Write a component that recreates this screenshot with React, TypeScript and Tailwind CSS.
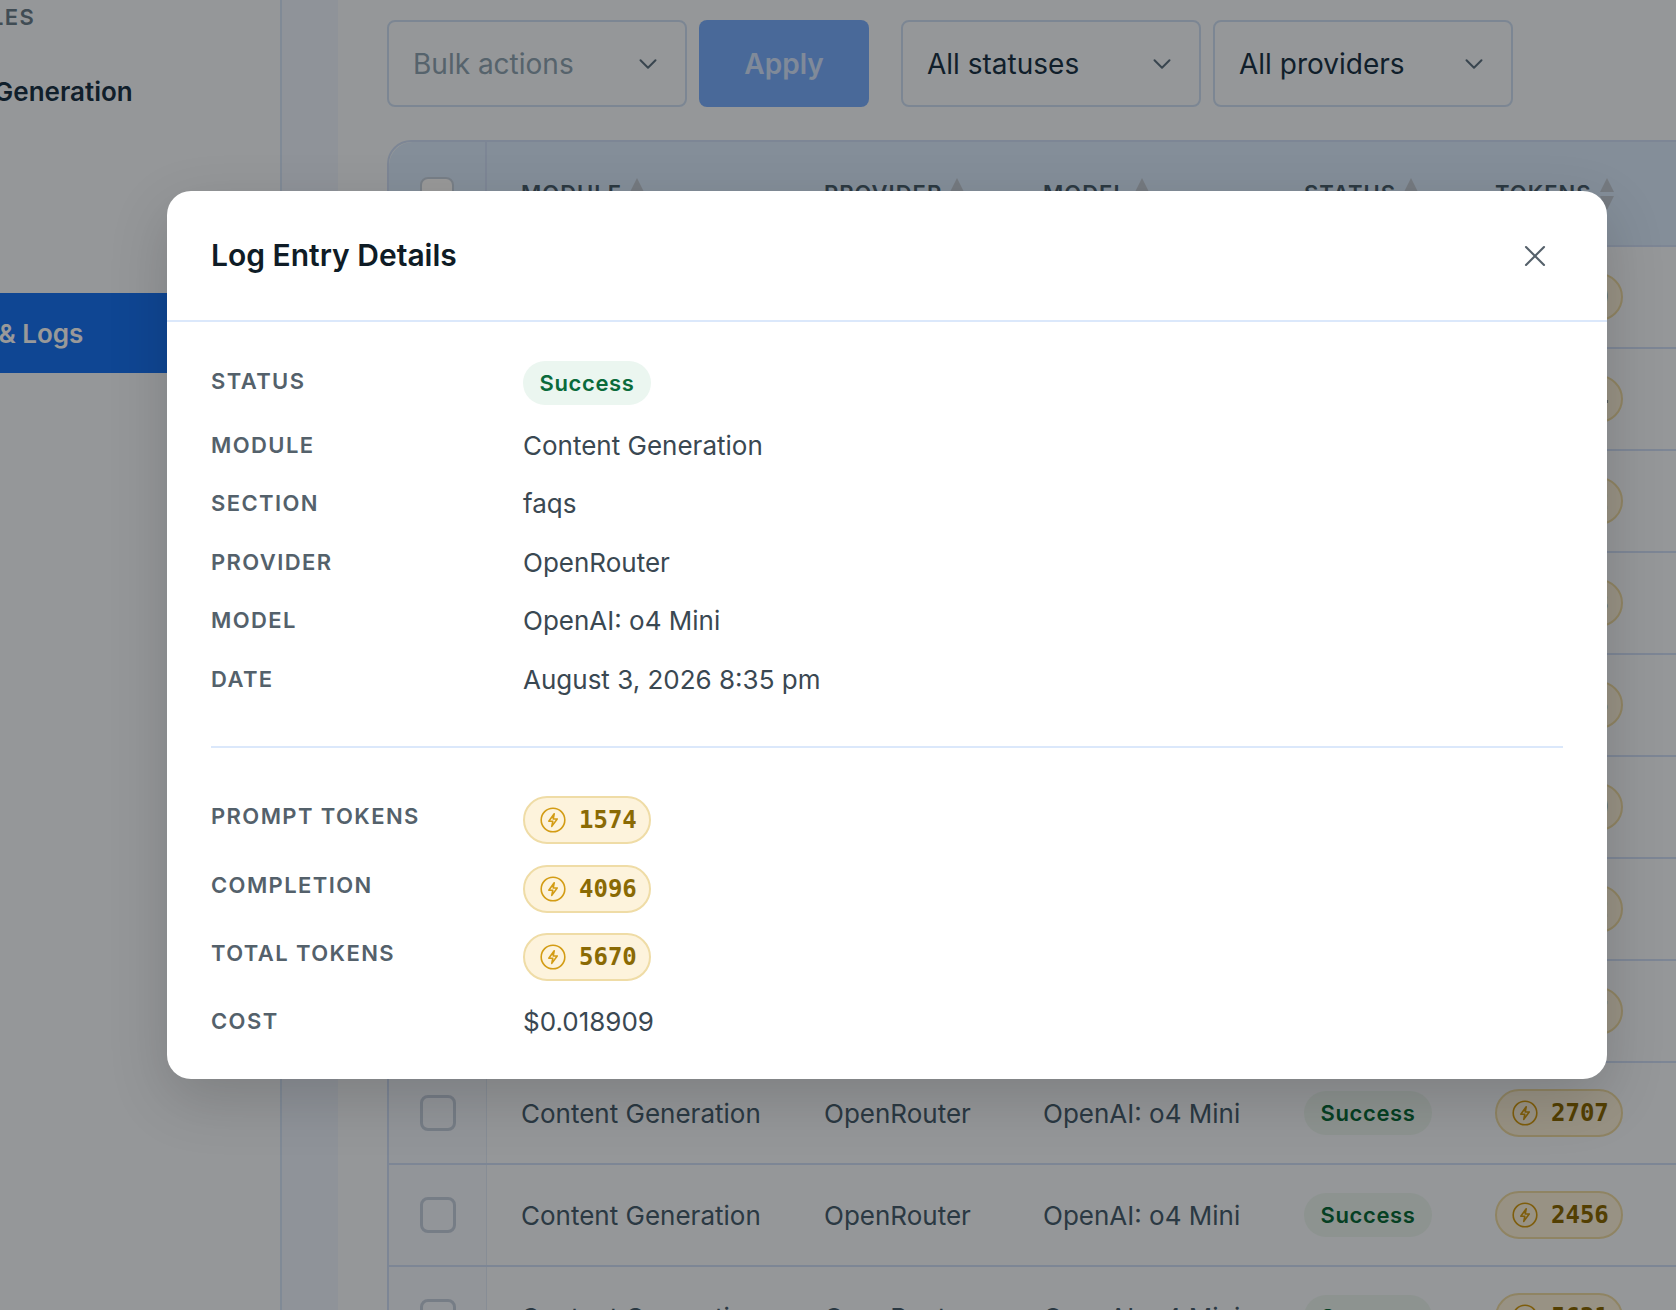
import { ChevronDown, X } from "lucide-react";

const rows = ["3120", "2874", "5012", "1988", "3345", "2690", "4122", "3907", "2707", "2456", "5621"];

function TokenBadge({ value }: { value: string }) {
  return (
    <span className="inline-flex h-[48px] w-[128px] items-center gap-[13px] rounded-full border-2 border-[#efdca6] bg-[#fdf3dc] pl-[15px] text-[#8a6a04]">
      <svg width="26" height="26" viewBox="0 0 26 26" fill="none" stroke="#d39c14" strokeWidth="1.6" strokeLinejoin="round" className="shrink-0">
        <circle cx="13" cy="13" r="11.8" />
        <path d="M14.2 6.8 8.8 14.2h4l-1 5.2 5.4-7.4h-4z" />
      </svg>
      <span className="font-['DejaVu_Sans_Mono',monospace] text-[24px] leading-none font-bold">{value}</span>
    </span>
  );
}

function SuccessBadge() {
  return (
    <span className="inline-flex h-[44px] w-[128px] items-center justify-center rounded-full bg-[#ebf6f0] text-[22px] font-semibold tracking-[0.6px] text-[#0a6b3b]">
      Success
    </span>
  );
}

function Select({ label, muted }: { label: string; muted?: boolean }) {
  return (
    <div className={`flex h-[87px] w-[300px] items-center justify-between rounded-lg border-2 border-[#cfe0f6] pr-[22px] pl-[24px] text-[28px] ${muted ? "text-[#8fa5b4]" : "text-[#1c3548]"}`}>
      {label}
      <ChevronDown size={30} strokeWidth={1.6} className="text-[#5f7484]" />
    </div>
  );
}

function HeaderCell({ label, both }: { label: string; both?: boolean }) {
  return (
    <div className="flex items-center gap-[8px] text-[22px] font-semibold tracking-[1px] text-[#4a5f6f]">
      {label}
      <span className="flex flex-col gap-[4px]">
        <span className="h-0 w-0 border-x-[7px] border-b-[14px] border-x-transparent border-b-[#c3ccd6]" />
        <span className={`h-0 w-0 border-x-[7px] border-t-[14px] border-x-transparent ${both ? "border-t-[#c3ccd6]" : "border-t-[#c3ccd6]"}`} />
      </span>
    </div>
  );
}

function Field({ label, value, className }: { label: string; value: string; className?: string }) {
  return (
    <div className={`flex h-[42px] items-center ${className ?? ""}`}>
      <div className="w-[312px] text-[22px] font-semibold tracking-[1.4px] text-[#54616b]">{label}</div>
      <div className="text-[26px] text-[#3a4852]">{value}</div>
    </div>
  );
}

function TokenField({ label, value }: { label: string; value: string }) {
  return (
    <div className="flex h-[48px] items-start">
      <div className="w-[312px] text-[22px] leading-[40px] font-semibold tracking-[1.4px] text-[#54616b]">{label}</div>
      <TokenBadge value={value} />
    </div>
  );
}

export default function App() {
  return (
    <div className="relative flex h-[1310px] w-[1676px] overflow-hidden bg-[#f8fcff] font-['Inter',sans-serif]">
      <aside className="w-[282px] shrink-0 overflow-hidden border-r-2 border-[#d6e6fa]">
        <div className="-ml-[84px] pt-[3px] text-[22px] leading-[28px] font-semibold tracking-[1.4px] whitespace-nowrap text-[#6b7f8d]">MODULES</div>
        <div className="mt-[43px] -ml-[113px] text-[26px] leading-[36px] font-semibold whitespace-nowrap text-[#1c3548]">Content Generation</div>
        <div className="mt-[183px] flex h-[80px] items-center bg-[#1975f5]">
          <span className="-ml-[88px] text-[26px] font-semibold whitespace-nowrap text-white">Usage &amp; Logs</span>
        </div>
      </aside>
      <div className="w-[56px] shrink-0 bg-[#eef5ff]" />
      <main className="min-w-0 flex-1 pt-[20px] pl-[49px]">
        <div className="flex">
          <Select label="Bulk actions" muted />
          <div className="ml-[12px] flex h-[87px] w-[170px] items-center justify-center rounded-lg bg-[#7bb0ff] text-[28px] font-semibold text-[#ffffff]/70">Apply</div>
          <div className="ml-[32px] flex gap-[12px]">
            <Select label="All statuses" />
            <Select label="All providers" />
          </div>
        </div>

        <div className="mt-[33px] w-[1500px] rounded-tl-3xl border-t-2 border-l-2 border-[#d0e0f8]">
          <div className="grid h-[105px] grid-cols-[98px_337px_219px_261px_191px_1fr] items-center rounded-tl-3xl border-b-2 border-[#d0e0f8] bg-[#dcedff]">
            <div className="flex h-full items-center justify-center border-r-2 border-[#d0e0f8]">
              <span className="h-[34px] w-[34px] rounded-lg border-2 border-[#c8d4e2] bg-white" />
            </div>
            <div className="pl-[34px]"><HeaderCell label="MODULE" /></div>
            <HeaderCell label="PROVIDER" />
            <HeaderCell label="MODEL" />
            <HeaderCell label="STATUS" />
            <HeaderCell label="TOKENS" both />
          </div>
          {rows.map((tokens) => (
            <div key={tokens} className="grid h-[102px] grid-cols-[98px_337px_219px_261px_191px_1fr] items-center border-b-2 border-[#d0e0f8] text-[26px] text-[#486070]">
              <div className="flex h-full items-center justify-center border-r border-[#e2ecf8] bg-[#f3f8ff]">
                <span className="h-[36px] w-[36px] rounded-lg border-[3px] border-[#c5d0e0]" />
              </div>
              <div className="pl-[34px]">Content Generation</div>
              <div>OpenRouter</div>
              <div>OpenAI: o4 Mini</div>
              <div><SuccessBadge /></div>
              <div className="flex"><TokenBadge value={tokens} /></div>
            </div>
          ))}
        </div>
      </main>

      <div className="absolute inset-0 bg-black/40" />

      <div className="absolute top-[191px] left-[167px] h-[888px] w-[1440px] rounded-3xl bg-white shadow-[0_20px_60px_rgba(0,0,0,0.16)]">
        <div className="flex h-[131px] items-center justify-between border-b-2 border-[#dbe8fb] pr-[54px] pl-[44px]">
          <h2 className="text-[30px] font-semibold text-[#0f1c26]">Log Entry Details</h2>
          <X size={36} strokeWidth={1.4} className="text-[#55606a]" />
        </div>
        <div className="px-[44px] pt-[39px]">
          <div className="flex h-[44px] items-start">
            <div className="w-[312px] text-[22px] leading-[40px] font-semibold tracking-[1.4px] text-[#54616b]">STATUS</div>
            <SuccessBadge />
          </div>
          <div className="mt-[19px] flex flex-col gap-[16.6px]">
            <Field label="MODULE" value="Content Generation" />
            <Field label="SECTION" value="faqs" />
            <Field label="PROVIDER" value="OpenRouter" />
            <Field label="MODEL" value="OpenAI: o4 Mini" />
            <Field label="DATE" value="August 3, 2026 8:35 pm" />
          </div>
          <div className="mt-[46px] border-t-2 border-[#dbe8fb]" />
          <div className="mt-[48px] flex flex-col gap-[20.5px]">
            <TokenField label="PROMPT TOKENS" value="1574" />
            <TokenField label="COMPLETION" value="4096" />
            <TokenField label="TOTAL TOKENS" value="5670" />
          </div>
          <Field label="COST" value="$0.018909" className="mt-[19px]" />
        </div>
      </div>
    </div>
  );
}
